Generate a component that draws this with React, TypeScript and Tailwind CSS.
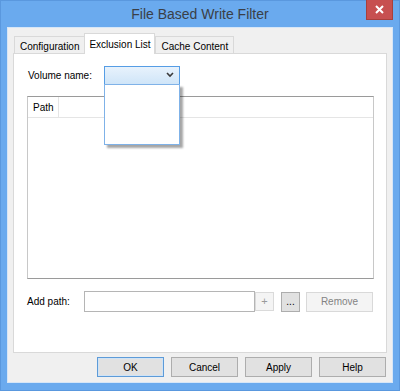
import type { ReactNode } from 'react'

const font = { fontFamily: '"Liberation Sans", Arial, sans-serif' }

function Tab({ label, active }: { label: string; active?: boolean }) {
  if (active) {
    return (
      <div className="relative z-10 -mb-px -ml-px flex h-[21px] w-[71px] items-start justify-center border border-b-0 border-[#d9d9d9] bg-white pt-[3px] text-[10px] text-black">
        {label}
      </div>
    )
  }
  return (
    <div className="flex h-[17px] items-start justify-center border border-b-0 border-[#d9d9d9] bg-[#f0f0f0] px-[5px] pt-[2px] text-[10px] text-black">
      {label}
    </div>
  )
}

function DialogButton({ children, primary }: { children: ReactNode; primary?: boolean }) {
  return (
    <button
      type="button"
      className={
        primary
          ? 'flex h-[20px] w-[67px] items-center justify-center border border-[#5d9bd8] bg-[#e1e1e1] text-[10px] text-black shadow-[inset_0_0_0_1px_#cfe3f6]'
          : 'flex h-[20px] w-[67px] items-center justify-center border border-[#adadad] bg-[#e1e1e1] text-[10px] text-black'
      }
    >
      {children}
    </button>
  )
}

export default function App() {
  return (
    <div
      className="flex h-[391px] w-[400px] flex-col border border-[#5a98de] bg-[#6aaaee]"
      style={font}
    >
      {/* title bar */}
      <div className="relative flex h-[26px] shrink-0 items-center justify-center">
        <span className="text-[14px] text-[#3a3f47]">File Based Write Filter</span>
        <div className="absolute right-[6px] top-[-1px] flex h-[20px] w-[27px] items-center justify-center border border-t-0 border-[#a8403c] bg-[#c75050]">
          <svg width="9" height="9" viewBox="0 0 9 9">
            <path d="M1 1 L8 8 M8 1 L1 8" stroke="#fff" strokeWidth="2" />
          </svg>
        </div>
      </div>

      {/* client */}
      <div className="mx-[6px] flex h-[356px] flex-col border border-[#d6e6f7] bg-[#f0f0f0] px-[5px] pt-[5px]">
        <div className="flex h-[20px] items-end pl-[1px]">
          <Tab label="Configuration" />
          <Tab label="Exclusion List" active />
          <Tab label="Cache Content" />
        </div>

        <div className="relative flex h-[300px] w-[374px] flex-col border border-[#d9d9d9] bg-white pl-[13px] pt-[11px]">
          <div className="flex h-[20px] items-center">
            <span className="w-[77px] pl-[1px] text-[10px] text-black">Volume name:</span>
            <div className="relative flex h-[19px] w-[76px] items-center justify-end border border-[#569de5] bg-gradient-to-b from-[#e8f2fc] to-[#cfe5f8] pr-[5px]">
              <svg width="8" height="6" viewBox="0 0 8 6">
                <path d="M1 1 L4 4 L7 1" fill="none" stroke="#3a3a3a" strokeWidth="1.6" />
              </svg>
              <div className="absolute left-[-1px] top-[17px] z-20 h-[61px] w-[76px] border border-[#7fb2e8] bg-white shadow-[3px_3px_2px_rgba(0,0,0,0.35)]" />
            </div>
          </div>

          <div className="mt-[11px] flex h-[183px] w-[347px] flex-col border border-[#9a9a9a] border-l-[#c8c8c8] border-r-[#c8c8c8]">
            <div className="flex h-[21px] border-b border-[#e5e5e5]">
              <div className="flex w-[31px] items-center border-r border-[#e5e5e5] pl-[5px] text-[10px] text-black">
                Path
              </div>
            </div>
          </div>

          <div className="mt-[12px] flex h-[21px] items-center">
            <span className="w-[57px] text-[10px] text-black">Add path:</span>
            <div className="h-[21px] w-[171px] border border-[#b5b5b5] bg-white" />
            <div className="flex h-[19px] w-[19px] items-center justify-center border border-[#dadada] bg-[#f4f4f4] text-[11px] text-[#9a9a9a]">
              +
            </div>
            <div className="ml-[7px] flex h-[20px] w-[19px] items-center justify-center border border-[#adadad] bg-[#e1e1e1] text-[10px] leading-none text-black">
              ...
            </div>
            <div className="ml-[6px] flex h-[20px] w-[67px] items-center justify-center border border-[#d9d9d9] bg-[#f4f4f4] text-[10px] text-[#838383]">
              Remove
            </div>
          </div>
        </div>

        <div className="mt-[4px] flex justify-end gap-[7px] pr-[1px]">
          <DialogButton primary>OK</DialogButton>
          <DialogButton>Cancel</DialogButton>
          <DialogButton>Apply</DialogButton>
          <DialogButton>Help</DialogButton>
        </div>
      </div>
    </div>
  )
}
